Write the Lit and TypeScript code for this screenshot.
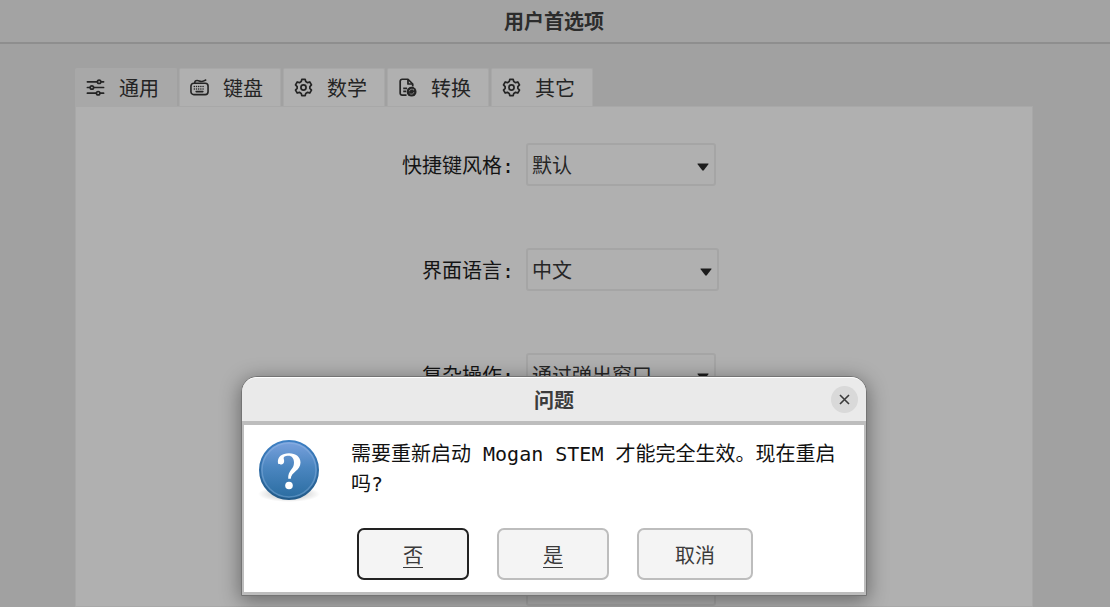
import { LitElement, html, css, svg } from "lit";
import { customElement, state } from "lit/decorators.js";

const icons = {
  sliders: svg`<g fill="none" stroke="currentColor" stroke-width="1.8" stroke-linecap="round">
    <path d="M1.500 4h10M16 4h2.500M1.500 10h2.500M8.500 10h10M1.500 16h9M15 16h3.500"/>
    <circle cx="13.800" cy="4" r="1.800"/><circle cx="6.200" cy="10" r="1.800"/><circle cx="12.800" cy="16" r="1.800"/></g>`,
  keyboard: svg`<g fill="none" stroke="currentColor" stroke-width="1.700" stroke-linecap="round">
    <rect x="1" y="5.500" width="18" height="12" rx="3"/>
    <path d="M5 5c0-1.800 1-2.300 2.500-2.300 2 0 2.500 1 4.500 1 1.800 0 2.500-.6 4.500-1.500"/>
    <path d="M4.500 9h11M4.500 11.500h11" stroke-width="1.500" stroke-dasharray=".1 2.200"/><path d="M6.500 14.300h7"/></g>`,
  gear: svg`<g fill="none" stroke="currentColor" stroke-width="1.800" stroke-linejoin="round">
    <path d="M8.200 1.500h3.600l.6 2.300 1.900 1.100 2.300-.7 1.800 3.100-1.700 1.700v2l1.700 1.700-1.800 3.100-2.300-.7-1.900 1.100-.6 2.300H8.200l-.6-2.300-1.900-1.100-2.300.7-1.800-3.100L3.300 11V9L1.600 7.300l1.800-3.100 2.300.7 1.900-1.100z"/>
    <circle cx="10" cy="10" r="2.700"/></g>`,
  convert: svg`<g fill="none" stroke="currentColor" stroke-width="1.800" stroke-linejoin="round">
    <path d="M9 18H4.300a2 2 0 0 1-2-2V3.300a2 2 0 0 1 2-2h6.200l5 5V9"/><path d="M10.500 1.500v4.800h4.800M5.500 11h4M5.500 14h3"/></g>
    <circle cx="14.300" cy="14.400" r="5.200" fill="currentColor"/>
    <path d="M11.900 14a2.500 2.500 0 0 1 4.500-1.200v-1.300M16.700 14.800a2.500 2.500 0 0 1-4.500 1.200" fill="none" stroke="#8a8a8a" stroke-width=".9"/>`,
};

const tabs: { label: string; icon: keyof typeof icons }[] = [
  { label: "通用", icon: "sliders" },
  { label: "键盘", icon: "keyboard" },
  { label: "数学", icon: "gear" },
  { label: "转换", icon: "convert" },
  { label: "其它", icon: "gear" },
];

const fields = [
  { id: "shortcut", label: "快捷键风格:", value: "默认", wide: false },
  { id: "language", label: "界面语言:", value: "中文", wide: true },
  { id: "complex", label: "复杂操作:", value: "通过弹出窗口", wide: false },
  { id: "field-4", label: "", value: "", wide: false },
  { id: "field-5", label: "", value: "", wide: false },
];

@customElement("question-dialog")
export class QuestionDialog extends LitElement {
  static styles = css`
    :host {
      display: block;
      color: #2c2c2c;
      font: 20px/30px "DejaVu Sans Mono", "Noto Sans CJK SC", monospace;
    }
    .window {
      border: 1px solid #747474;
      border-radius: 16px 16px 0 0;
      background: #bdbdbd;
      box-shadow: 0 4px 20px 1px rgba(0, 0, 0, 0.4);
    }
    .titlebar {
      display: grid;
      grid-template-columns: 1fr auto 1fr;
      align-items: center;
      height: 44px;
      padding: 0 8px;
      border-top: 1px solid #fff;
      border-radius: 15px 15px 0 0;
      box-sizing: border-box;
      background: #eaeaea;
    }
    .title {
      grid-column: 2;
      margin: 0;
      font: 700 20px/30px "Noto Sans CJK SC", sans-serif;
      color: #3c3c3c;
    }
    .close {
      justify-self: end;
      display: grid;
      place-items: center;
      width: 27px;
      height: 27px;
      padding: 0;
      border: 0;
      border-radius: 50%;
      background: #d9d9d9;
      color: #3a3a3a;
    }
    .body {
      margin: 4px 2px 3px;
      padding: 14px 14px 12px;
      background: #fff;
    }
    .message {
      display: flex;
      align-items: flex-start;
      gap: 31px;
    }
    .text {
      flex: 1;
      margin: 0;
      color: #111;
    }
    .actions {
      display: flex;
      justify-content: center;
      gap: 28px;
      padding: 25px 0 0 2px;
    }
    .action {
      min-width: 112px;
      height: 52px;
      padding: 1px 36px 0;
      border: 2px solid #bdbdbd;
      border-radius: 7px;
      background: #f4f4f4;
      color: #3a3a3a;
      font: 20px/30px "Noto Sans CJK SC", sans-serif;
    }
    .primary {
      border-color: #222;
    }
    .mnemonic {
      display: inline-block;
      line-height: 24px;
      border-bottom: 1px solid currentColor;
    }
  `;

  render() {
    return html`
      <section class="window" role="dialog" aria-labelledby="title" aria-describedby="text">
        <header class="titlebar">
          <h2 class="title" id="title">问题</h2>
          <button class="close" aria-label="关闭">
            <svg width="11" height="11" viewBox="0 0 11 11" fill="none" stroke="currentColor" stroke-width="1.600">
              <path d="M1 1l9 9M10 1l-9 9" />
            </svg>
          </button>
        </header>
        <div class="body">
          <div class="message">
            <svg width="62" height="64" viewBox="0 0 62 64" aria-hidden="true">
              <defs>
                <linearGradient id="ball" x1="0" y1="0" x2="0" y2="1">
                  <stop offset="0" stop-color="#7ba2de" />
                  <stop offset=".45" stop-color="#4b86c0" />
                  <stop offset="1" stop-color="#2a6ca0" />
                </linearGradient>
                <linearGradient id="rim" x1="0" y1="0" x2="0" y2="1">
                  <stop offset="0" stop-color="#3d80c4" />
                  <stop offset="1" stop-color="#235a88" />
                </linearGradient>
                <radialGradient id="shade">
                  <stop offset="0" stop-color="#000" stop-opacity=".3" />
                  <stop offset="1" stop-color="#000" stop-opacity="0" />
                </radialGradient>
              </defs>
              <ellipse cx="31" cy="55" rx="31" ry="8" fill="url(#shade)" />
              <circle cx="31" cy="31" r="29" fill="url(#ball)" stroke="url(#rim)" stroke-width="2" />
              <circle cx="31" cy="31" r="27" fill="none" stroke="#9dc0e8" stroke-opacity=".35" stroke-width="1.500" />
              <path
                d="M20 24.500C19 17.500 24 14.200 31 14.200c7 0 11.500 3.700 11.500 9.300 0 8.500-9.200 9-9.700 16.300h-2.600c-.4-8.500 5.800-9.300 5.800-16 0-4.300-2-7-5.800-7-3 0-5 1.200-4.400 3.200.8 2.500.3 5.200-2.300 5.400-1.800.2-3.100-.4-3.500-.9z"
                fill="#fff"
              />
              <circle cx="31" cy="46.500" r="3.800" fill="#fff" />
            </svg>
            <p class="text" id="text">需要重新启动 Mogan STEM 才能完全生效。现在重启吗?</p>
          </div>
          <div class="actions">
            <button class="action primary"><span class="mnemonic">否</span></button>
            <button class="action"><span class="mnemonic">是</span></button>
            <button class="action">取消</button>
          </div>
        </div>
      </section>
    `;
  }
}

@customElement("app-root")
export class AppRoot extends LitElement {
  @state() private active = 0;

  static styles = css`
    :host {
      display: block;
      position: relative;
      height: 100vh;
      overflow: hidden;
      background: #a1a1a1;
      color: #141414;
      font: 20px/30px "DejaVu Sans Mono", "Noto Sans CJK SC", monospace;
    }
    .page {
      display: flex;
      flex-direction: column;
      height: 100%;
    }
    .heading {
      margin: 0;
      padding: 6px 2px 6px 0;
      border-bottom: 2px solid #8e8e8e;
      background: #a3a3a3;
      text-align: center;
      font: 700 20px/30px "Noto Sans CJK SC", sans-serif;
      color: #2c2c2c;
    }
    .content {
      flex: 1;
      display: flex;
      flex-direction: column;
      min-height: 0;
      padding: 24px 77px 0 75px;
    }
    .tabs {
      display: flex;
      gap: 2px;
    }
    .tab {
      display: flex;
      align-items: center;
      gap: 14px;
      width: 102px;
      height: 38px;
      padding: 0 0 0 10px;
      border: 1px solid #a8a8a8;
      border-bottom: 0;
      border-radius: 2px 2px 0 0;
      background: #b0b0b0;
      color: #242424;
      font: 20px/30px "Noto Sans CJK SC", sans-serif;
    }
    .tab.active {
      background: #a8a8a8;
    }
    .panel {
      flex: 1;
      min-height: 0;
      border: 1px solid #a8a8a8;
      background: #b0b0b0;
    }
    .form {
      display: grid;
      grid-template-columns: 438px 1fr;
      grid-auto-rows: 43px;
      column-gap: 12px;
      row-gap: 62px;
      align-items: center;
      padding-top: 36px;
    }
    .label {
      padding-top: 3px;
      text-align: right;
    }
    .select {
      appearance: none;
      width: 190px;
      height: 43px;
      padding: 1px 5px 0 4px;
      border: 2px solid #a5a5a5;
      border-radius: 3px;
      background: #b0b0b0;
      color: #262626;
      font: 20px/30px "Noto Sans CJK SC", sans-serif;
    }
    .box {
      display: grid;
      justify-self: start;
      align-items: center;
    }
    .select,
    .arrow {
      grid-area: 1 / 1;
    }
    .wide {
      width: 193px;
    }
    .arrow {
      justify-self: end;
      margin: 4px 7px 0 0;
      pointer-events: none;
    }
    .dialog {
      position: absolute;
      top: 376px;
      left: calc(50% - 314px);
      width: 626px;
    }
  `;

  render() {
    return html`
      <main class="page">
        <h1 class="heading">用户首选项</h1>
        <div class="content">
          <div class="tabs" role="tablist">
            ${tabs.map(
              (tab, i) => html`
                <button
                  class="tab ${i === this.active ? "active" : ""}"
                  role="tab"
                  aria-selected=${i === this.active ? "true" : "false"}
                  @click=${() => (this.active = i)}
                >
                  <svg width="19" height="19" viewBox="0 0 20 20" aria-hidden="true">${icons[tab.icon]}</svg>
                  ${tab.label}
                </button>
              `,
            )}
          </div>
          <div class="panel" role="tabpanel">
            <div class="form">
              ${fields.map(
                (field) => html`
                  <label class="label" for=${field.id}>${field.label}</label>
                  <div class="box">
                    <select class="select ${field.wide ? "wide" : ""}" id=${field.id}>
                      <option>${field.value}</option>
                    </select>
                    <svg class="arrow" width="12" height="8" viewBox="0 0 12 8" aria-hidden="true">
                      <path d="M1 .5h10q1 0 .4.800L6.800 7.200q-.8.900-1.600 0L.6 1.300Q0 .5 1 .5z" fill="#1c1c1c" />
                    </svg>
                  </div>
                `,
              )}
            </div>
          </div>
        </div>
      </main>
      <question-dialog class="dialog"></question-dialog>
    `;
  }
}
